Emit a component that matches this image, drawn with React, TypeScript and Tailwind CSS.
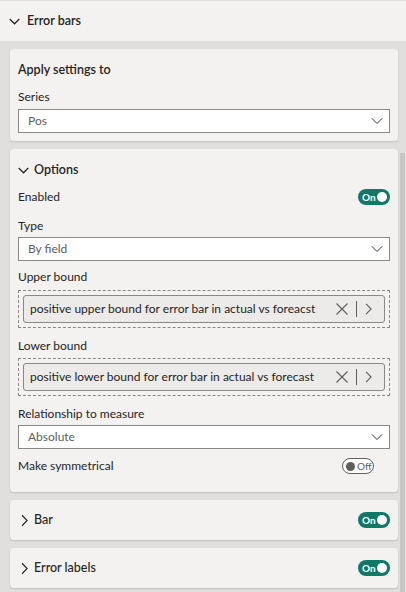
import React from "react";

const font = { fontFamily: 'Lato, "Noto Sans", sans-serif' };

function ChevronDown({ className = "", stroke = 1.3 }: { className?: string; stroke?: number }) {
  return (
    <svg viewBox="0 0 12 12" className={className} fill="none" stroke="currentColor" strokeWidth={stroke}>
      <path d="M0.8 3.3 6 8.5l5.2-5.2" />
    </svg>
  );
}

function ChevronRight({ className = "" }: { className?: string }) {
  return (
    <svg viewBox="0 0 8 14" className={className} fill="none" stroke="currentColor" strokeWidth={1.3}>
      <path d="M1.2 1 7 7l-5.8 6" />
    </svg>
  );
}

function ToggleOn() {
  return (
    <div className="flex h-[16px] w-[32px] items-center justify-between rounded-full bg-[#117865] pl-[4px] pr-[3px]">
      <span className="text-[10px] font-bold leading-none text-white">On</span>
      <span className="h-[10px] w-[10px] rounded-full bg-white" />
    </div>
  );
}

function ToggleOff() {
  return (
    <div className="flex h-[16px] w-[32px] items-center gap-[2px] rounded-full border border-[#605e5c] bg-white pl-[3px]">
      <span className="h-[9px] w-[9px] rounded-full bg-[#605e5c]" />
      <span className="text-[10px] leading-none text-[#605e5c]">Off</span>
    </div>
  );
}

function Select({ value }: { value: string }) {
  return (
    <div className="flex h-[24px] items-center justify-between border border-[#8a8886] bg-white pl-[9px] pr-[6px]">
      <span className="text-[12px] text-[#605e5c]">{value}</span>
      <ChevronDown className="h-[12px] w-[12px] text-[#323130]" stroke={1} />
    </div>
  );
}

function FieldWell({ value }: { value: string }) {
  return (
    <div className="border border-dashed border-[#8a8886] p-[4px]">
      <div className="flex h-[28px] items-center justify-between rounded-[3px] border border-[#8a8886] bg-[#edebe9] pl-[6px] pr-[12px]">
        <span className="whitespace-nowrap text-[12px] text-[#252423]">{value}</span>
        <div className="flex items-center gap-[8px] text-[#605e5c]">
          <svg viewBox="0 0 12 12" className="h-[12px] w-[12px]" fill="none" stroke="currentColor" strokeWidth={1.1}>
            <path d="M0.5 0.5l11 11M11.5 0.5l-11 11" />
          </svg>
          <span className="h-[16px] w-px bg-[#605e5c]" />
          <ChevronRight className="h-[12px] w-[7px]" />
        </div>
      </div>
    </div>
  );
}

function Label({ children }: { children: React.ReactNode }) {
  return <div className="text-[12px] leading-[16px] text-[#252423]">{children}</div>;
}

function Card({ children, className = "" }: { children: React.ReactNode; className?: string }) {
  return (
    <div className={`rounded-[4px] bg-[#f3f2f1] shadow-[0_1px_2px_rgba(0,0,0,0.14)] ${className}`}>
      {children}
    </div>
  );
}

export default function App() {
  return (
    <div style={font} className="flex h-[592px] w-[406px] flex-col overflow-hidden bg-[#e1dfdd] text-[#252423]">
      <div className="flex h-[41px] shrink-0 items-center gap-[7px] border-t border-[#e1dfdd] bg-[#f3f2f1] pl-[9px]">
        <ChevronDown className="h-[11px] w-[11px]" />
        <span className="text-[12.5px] font-semibold">Error bars</span>
      </div>
      <div className="flex flex-1 pt-[8px]">
        <div className="flex flex-1 flex-col gap-[8px] pl-[10px] pr-[1px]">
          <Card className="px-[8px] pb-[8px] pt-[13px]">
            <div className="text-[12.5px] font-semibold leading-[16px]">Apply settings to</div>
            <div className="mt-[11px]">
              <Label>Series</Label>
            </div>
            <div className="mt-[4px]">
              <Select value="Pos" />
            </div>
          </Card>

          <Card className="px-[8px] pb-[18px] pt-[13px]">
            <div className="flex items-center gap-[5px]">
              <ChevronDown className="h-[11px] w-[11px]" />
              <span className="text-[12.5px] font-semibold leading-[16px]">Options</span>
            </div>
            <div className="mt-[11px] flex items-center justify-between">
              <Label>Enabled</Label>
              <ToggleOn />
            </div>
            <div className="mt-[13px]">
              <Label>Type</Label>
            </div>
            <div className="mt-[3px]">
              <Select value="By field" />
            </div>
            <div className="mt-[8px]">
              <Label>Upper bound</Label>
            </div>
            <div className="mt-[5px]">
              <FieldWell value="positive upper bound for error bar in actual vs foreacst" />
            </div>
            <div className="mt-[10px]">
              <Label>Lower bound</Label>
            </div>
            <div className="mt-[4px]">
              <FieldWell value="positive lower bound for error bar in actual vs forecast" />
            </div>
            <div className="mt-[10px]">
              <Label>Relationship to measure</Label>
            </div>
            <div className="mt-[3px]">
              <Select value="Absolute" />
            </div>
            <div className="mt-[9px] flex items-center justify-between pr-[16px]">
              <Label>Make symmetrical</Label>
              <ToggleOff />
            </div>
          </Card>

          <Card className="flex h-[40px] items-center justify-between px-[8px]">
            <div className="flex items-center gap-[6px] pl-[3px]">
              <ChevronRight className="h-[13px] w-[7px]" />
              <span className="text-[12.5px] font-medium">Bar</span>
            </div>
            <ToggleOn />
          </Card>

          <Card className="flex h-[40px] items-center justify-between px-[8px]">
            <div className="flex items-center gap-[6px] pl-[3px]">
              <ChevronRight className="h-[13px] w-[7px]" />
              <span className="text-[12.5px] font-medium">Error labels</span>
            </div>
            <ToggleOn />
          </Card>
        </div>
        <div className="w-[7px] shrink-0 pl-[1px] pr-[1px]">
          <div className="mt-[104px] h-[440px] w-[5px] bg-[#c8c6c4]" />
        </div>
      </div>
    </div>
  );
}
